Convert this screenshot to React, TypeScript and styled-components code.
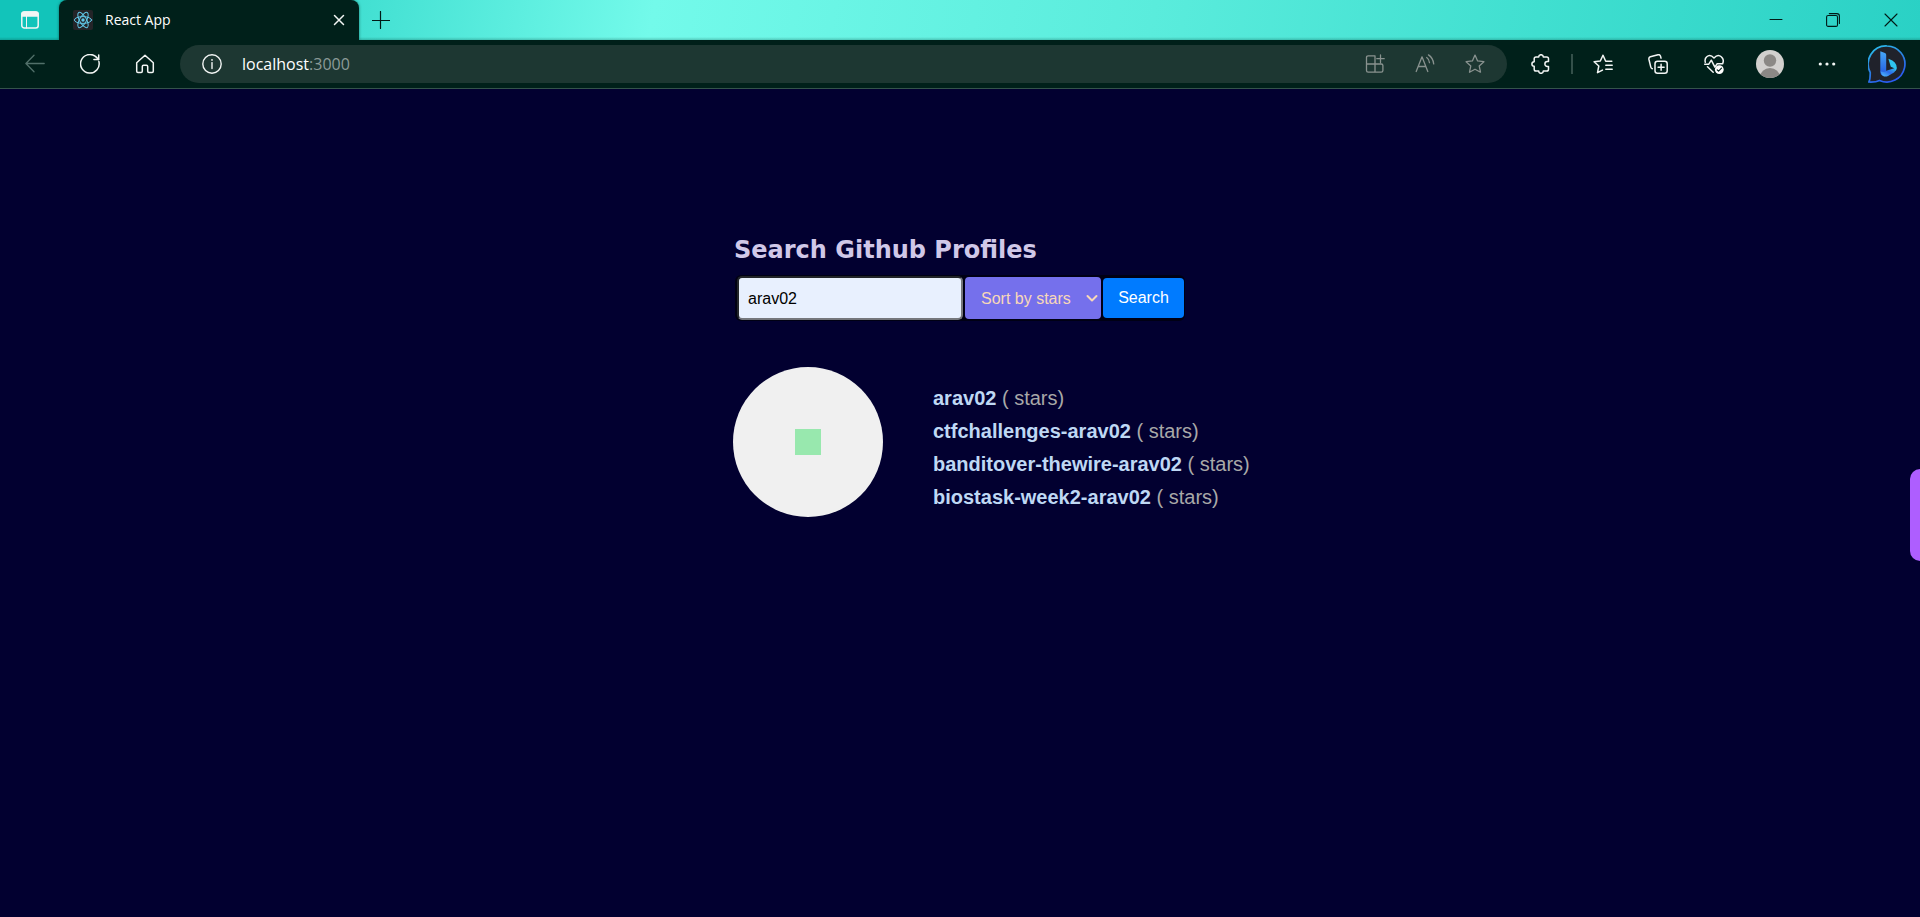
import React, { useState } from "react";
import styled, { createGlobalStyle } from "styled-components";

const GlobalStyle = createGlobalStyle`
  * { box-sizing: border-box; }
  body { margin: 0; background: #020030; overflow-x: hidden; }
`;

const chromeFont = `"Open Sans", "Noto Sans", sans-serif`;
const pageFont = `"Liberation Sans", Arial, sans-serif`;

const Window = styled.div`
  min-height: 100vh;
  display: flex;
  flex-direction: column;
  background: #020030;
  overflow: hidden;
`;

const TitleBar = styled.header`
  display: flex;
  height: 40px;
  background:
    linear-gradient(to bottom, transparent 37px, rgba(0, 60, 50, 0.25)),
    linear-gradient(100deg, #12c4ba 0%, #12c4ba 4%, #46e2d4 20%, #73faea 34%, #5aecdc 60%, #40dfd0 80%, #2ad1c5 100%);
`;

const IconButton = styled.button<{ $width?: number; $color?: string }>`
  display: flex;
  align-items: center;
  justify-content: center;
  flex: none;
  width: ${(p) => p.$width ?? 54}px;
  height: 100%;
  padding: 0;
  border: 0;
  background: none;
  color: ${(p) => p.$color ?? "#f2f5f4"};
`;

const Tab = styled.div`
  display: flex;
  align-items: center;
  width: 300px;
  height: 40px;
  padding: 0 4px 0 14px;
  gap: 12px;
  border-radius: 8px 8px 0 0;
  background: #00201a;
  box-shadow: 0 0 3px rgba(0, 50, 44, 0.6);
  color: #fff;
  font: 14px/20px ${chromeFont};
`;

const TabTitle = styled.span`
  flex: 1;
`;

const WindowControls = styled.div`
  display: flex;
  margin-left: auto;
`;

const Toolbar = styled.nav`
  display: flex;
  align-items: center;
  gap: 1px;
  height: 49px;
  padding: 0 3px 0 8px;
  background: #00201a;
  border-bottom: 1px solid #34534b;
`;

const AddressBar = styled.div`
  display: flex;
  align-items: center;
  flex: 1;
  height: 38px;
  margin: 0 6px 0 7px;
  padding: 0 7px 0 22px;
  border-radius: 19px;
  background: #1d3732;
  color: #f2f5f4;
`;

const Address = styled.div`
  flex: 1;
  margin-left: 20px;
  color: #8c9b98;
  font: 16px/24px ${chromeFont};
`;

const Host = styled.span`
  color: #fff;
`;

const Divider = styled.span`
  width: 2px;
  height: 20px;
  margin: 0 2px;
  background: #34504a;
`;

const Page = styled.main`
  position: relative;
  flex: 1;
  font-family: ${pageFont};
`;

const Content = styled.div`
  width: 454px;
  margin: 0 auto;
  padding-top: 145px;
`;

const Heading = styled.h1`
  margin: 0 1px 9px;
  color: #d0c8e8;
  font: bold 24px/32px "DejaVu Sans", Verdana, sans-serif;
  white-space: nowrap;
`;

const SearchForm = styled.form`
  display: flex;
  align-items: center;
  gap: 2px;
  width: 450px;
  height: 46px;
  margin-left: 2px;
  padding: 0 1px 0 2px;
  border-radius: 6px;
  background: #000014;
`;

const SearchInput = styled.input`
  width: 226px;
  height: 44px;
  padding: 2px 9px 0;
  border: 2px solid;
  border-color: #22252a #75777c #75777c #22252a;
  border-radius: 5px;
  background: #e8f0fe;
  color: #000;
  font: 16px ${pageFont};
`;

const SortField = styled.div`
  display: grid;
  align-items: center;
  width: 136px;
  color: #f8d8b8;

  > * { grid-area: 1 / 1; }
  > svg {
    justify-self: end;
    margin-right: 3px;
    pointer-events: none;
  }
`;

const SortSelect = styled.select`
  appearance: none;
  width: 100%;
  height: 42px;
  padding: 0 0 0 16px;
  border: 0;
  border-radius: 4px;
  background: #7570ec;
  color: inherit;
  font: 16px ${pageFont};
`;

const SearchButton = styled.button`
  flex: 1;
  height: 40px;
  padding: 0;
  border: 0;
  border-radius: 4px;
  background: #007bff;
  color: #fff;
  font: 16px ${pageFont};
`;

const Results = styled.section`
  display: flex;
  align-items: center;
  gap: 50px;
  margin-top: 46px;
`;

const Avatar = styled.div`
  display: flex;
  align-items: center;
  justify-content: center;
  flex: none;
  width: 150px;
  height: 150px;
  border-radius: 50%;
  background: #f0f0f0;
`;

const Identicon = styled.div`
  width: 26px;
  height: 26px;
  background: #98e8ae;
`;

const RepoList = styled.ul`
  margin: 12px 0 0;
  padding: 0;
  list-style: none;
  color: #a8a8a8;
  font-size: 20px;
  line-height: 33px;
  white-space: nowrap;
`;

const RepoLink = styled.a`
  color: #bfd8f4;
  font-weight: bold;
  text-decoration: none;
`;

const SideHandle = styled.button`
  position: absolute;
  top: 380px;
  right: 0;
  width: 10px;
  height: 92px;
  padding: 0;
  border: 0;
  border-radius: 10px 0 0 10px;
  background: #ae5eff;
`;

type IconProps = { size?: number; weight?: number; children: React.ReactNode };

const Icon = ({ size = 20, weight = 1.3, children }: IconProps) => (
  <svg
    width={size}
    height={size}
    viewBox={`0 0 ${size} ${size}`}
    fill="none"
    stroke="currentColor"
    strokeWidth={weight}
    strokeLinecap="round"
    strokeLinejoin="round"
    aria-hidden="true"
  >
    {children}
  </svg>
);

const TabActionsIcon = () => (
  <Icon weight={1.5}>
    <rect x="1.8" y="2" width="16.4" height="16" rx="2.5" />
    <path d="M2 4.5Q2 2 4.5 2h11Q18 2 18 4.500V6H2z" fill="currentColor" />
    <path d="M6.500 6v12" strokeWidth="1" />
  </Icon>
);

const ReactIcon = () => (
  <Icon weight={1}>
    <rect width="20" height="20" rx="2" fill="#242428" stroke="none" />
    <g stroke="#61c8e8">
      <ellipse cx="10" cy="10" rx="8.600" ry="3.400" />
      <ellipse cx="10" cy="10" rx="8.600" ry="3.400" transform="rotate(60 10 10)" />
      <ellipse cx="10" cy="10" rx="8.600" ry="3.400" transform="rotate(120 10 10)" />
    </g>
    <circle cx="10" cy="10" r="1.700" fill="#61c8e8" stroke="none" />
  </Icon>
);

const CloseTabIcon = () => (
  <Icon size={12} weight={1.5}><path d="m1.500 1.500 9 9m0-9-9 9" /></Icon>
);

const PlusIcon = () => (
  <Icon size={18} weight={1.2}><path d="M8.500.5v17M.5 9.500h17" /></Icon>
);

const MinimizeIcon = () => (
  <Icon size={14} weight={1}><path d="M1 6.500h12" /></Icon>
);

const RestoreIcon = () => (
  <Icon size={14} weight={1.1}>
    <rect x=".6" y="2.500" width="10.900" height="10.900" rx="1.500" />
    <path d="M3.300.600h7.500Q13.400.600 13.400 3v7.500" />
  </Icon>
);

const CloseIcon = () => (
  <Icon size={14} weight={1.1}><path d="m1 1 12 12m0-12L1 13" /></Icon>
);

const BackIcon = () => (
  <Icon><path d="M19.200 9.500H1.200M9 1.300.9 9.500 9 17.700" /></Icon>
);

const ReloadIcon = () => (
  <Icon weight={1.5}>
    <path d="M18.900 7.600A9.300 9.300 0 1 1 15.500 2.400L18.500 5.400" />
    <path d="M18.700.9v4.700h-4.800" />
  </Icon>
);

const HomeIcon = () => (
  <Icon weight={1.500}>
    <path d="M1.700 8.700 10 1.200l8.300 7.500v8.600q0 1.200-1.200 1.200h-3.200q-1.200 0-1.200-1.200v-4.800q0-1.200-1.200-1.200h-3q-1.200 0-1.200 1.200v4.800q0 1.200-1.200 1.200H2.900q-1.200 0-1.200-1.200z" />
  </Icon>
);

const InfoIcon = () => (
  <Icon weight={1.400}>
    <circle cx="10" cy="10" r="9.200" />
    <path d="M10 8.600v6" />
    <circle cx="10" cy="5.900" r=".9" fill="currentColor" stroke="none" />
  </Icon>
);

const AppsIcon = () => (
  <Icon>
    <path d="M10 1.800H3.200Q1.500 1.800 1.500 3.500v13q0 1.700 1.700 1.700h13q1.700 0 1.700-1.700v-5q0-1.500-1.700-1.500H1.500M10 1.800v16.400M15.500.9v7.600M11.800 4.700h7.400" />
  </Icon>
);

const ReadAloudIcon = () => (
  <Icon>
    <path d="M1.200 17.500 7 2.800l5.800 14.700M3.200 12.500h7.700M11.700 3.500q2.600 1.800 2.800 5.200M13.500.9q4.700 3.200 5.200 9" />
  </Icon>
);

const StarIcon = () => (
  <Icon>
    <path d="m10 1.100 2.600 5.800 6.300.8-4.700 4.200 1.300 6.300L10 15.200l-5.500 3 1.300-6.300L1.100 7.700l6.300-.8z" />
  </Icon>
);

const PuzzleIcon = () => (
  <Icon weight={1.500}>
    <path d="M5 3h2.700a2.300 2.300 0 0 1 4.600 0h3.400q1.800 0 1.800 1.800v2.800h-1.200a2.400 2.400 0 0 0 0 4.800h1.200v2.800q0 1.800-1.800 1.800h-3.400a2.300 2.300 0 0 1-4.600 0H5q-1.800 0-1.800-1.800v-2.900a2.300 2.300 0 0 1 0-4.600V4.800Q3.200 3 5 3z" />
  </Icon>
);

const FavoritesIcon = () => (
  <Icon weight={1.500}>
    <path d="M18.800 7.200h-6.100L10 1.200 7.300 7l-6.200.8 4.700 4.200-1.300 6.700 5-2.600M12.800 11.200h6.400M12.800 15.200h6.400" />
  </Icon>
);

const CollectionsIcon = () => (
  <Icon weight={1.500}>
    <rect x="7" y="7.200" width="12.200" height="12" rx="2.500" />
    <path d="M13.100 10.200v6M10.100 13.200h6M4.300 14.800q-1.200-.5-1.500-1.700L.9 5.200Q.6 3.400 2.300 2.700l7.800-2q1.900-.3 2.400 1.400l.5 2" />
  </Icon>
);

const HealthIcon = () => (
  <Icon weight={1.500}>
    <path d="M1.300 8.200Q.4 4.700 2.700 2.800c2.200-2 5-1.400 7.300 1.100 2.300-2.500 5.100-3.100 7.300-1.100 2.300 1.900 2.100 4.800 1.500 6.400M3.500 12.700l5.700 5.500M.7 10.200h4.100l2.500-4 3.600 7 2.300-3.500h5.500" />
    <circle cx="15.300" cy="15.600" r="4.400" fill="#fff" stroke="none" />
    <path d="m13.200 15.800 1.400 1.400 2.900-3" stroke="#00201a" strokeWidth="1.200" />
  </Icon>
);

const ProfileIcon = () => (
  <svg width="28" height="28" viewBox="0 0 28 28" aria-hidden="true">
    <defs><clipPath id="profile"><circle cx="14" cy="14" r="14" /></clipPath></defs>
    <g clipPath="url(#profile)">
      <rect width="28" height="28" fill="#d2d0ce" />
      <circle cx="14" cy="10.500" r="6.200" fill="#8b8885" />
      <ellipse cx="14" cy="27" rx="10" ry="9" fill="#8b8885" />
    </g>
  </svg>
);

const MoreIcon = () => (
  <Icon>
    <g fill="currentColor" stroke="none">
      <circle cx="3.300" cy="10" r="1.600" />
      <circle cx="10" cy="10" r="1.600" />
      <circle cx="16.700" cy="10" r="1.600" />
    </g>
  </Icon>
);

const ChevronIcon = () => (
  <Icon size={12} weight={2}><path d="m1.500 4 4.500 4.500L10.500 4" /></Icon>
);

const BingIcon = () => (
  <svg width="38" height="38" viewBox="0 0 38 38" aria-hidden="true">
    <defs>
      <linearGradient id="ring" x1="0" y1="0" x2=".5" y2="1">
        <stop stopColor="#2cc8f0" />
        <stop offset=".5" stopColor="#2a88e0" />
        <stop offset="1" stopColor="#2a5cf0" />
      </linearGradient>
      <linearGradient id="stem" x1="0" y1="0" x2="0" y2="1">
        <stop stopColor="#46a8f8" />
        <stop offset="1" stopColor="#2156df" />
      </linearGradient>
      <linearGradient id="bowl" x1="0" y1="1" x2="1" y2="0">
        <stop stopColor="#56c9ff" />
        <stop offset=".5" stopColor="#2c6bea" />
        <stop offset="1" stopColor="#31c8e8" />
      </linearGradient>
    </defs>
    <path d="M19 1a18 18 0 1 1-7.500 34.400Q8 37.300.900 37q1.500-2.800 1.300-9.700A18 18 0 0 1 19 1z" fill="#20222b" stroke="url(#ring)" strokeWidth="1.700" />
    <path d="M12.300 6.200 17 8q1.200.5 1.200 1.700v16l-3 5.300q-2.900-1-2.900-4.500z" fill="url(#stem)" />
    <path d="M12.500 26.500q.8 3.800 3.500 4.900 2 .6 4-.5l6-3.500q2.700-1.800 2.700-4.900l-10.500 3.200-2 1.200z" fill="url(#bowl)" />
    <path d="M20.500 14.300q-.6-.6.500-.4 7.700 2.600 7.700 8.700 0 2-1.200 3.400 0-2.300-2.300-3.200l-2.400-1.100z" fill="#2fc5ee" />
  </svg>
);

const repositories = [
  "arav02",
  "ctfchallenges-arav02",
  "banditover-thewire-arav02",
  "biostask-week2-arav02",
];

export default function App() {
  const [query, setQuery] = useState("arav02");

  return (
    <Window>
      <GlobalStyle />
      <TitleBar>
        <IconButton $width={59} aria-label="Tab actions"><TabActionsIcon /></IconButton>
        <Tab>
          <ReactIcon />
          <TabTitle>React App</TabTitle>
          <IconButton $width={32} aria-label="Close tab"><CloseTabIcon /></IconButton>
        </Tab>
        <IconButton $width={44} $color="#001a16" aria-label="New tab"><PlusIcon /></IconButton>
        <WindowControls>
          <IconButton $width={56} $color="#001a16" aria-label="Minimize"><MinimizeIcon /></IconButton>
          <IconButton $width={58} $color="#001a16" aria-label="Restore"><RestoreIcon /></IconButton>
          <IconButton $width={58} $color="#001a16" aria-label="Close"><CloseIcon /></IconButton>
        </WindowControls>
      </TitleBar>

      <Toolbar>
        <IconButton $color="#51706a" aria-label="Back"><BackIcon /></IconButton>
        <IconButton aria-label="Refresh"><ReloadIcon /></IconButton>
        <IconButton aria-label="Home"><HomeIcon /></IconButton>
        <AddressBar>
          <InfoIcon />
          <Address><Host>localhost</Host>:3000</Address>
          <IconButton $width={50} $color="#89928f" aria-label="Install app"><AppsIcon /></IconButton>
          <IconButton $width={50} $color="#89928f" aria-label="Read aloud"><ReadAloudIcon /></IconButton>
          <IconButton $width={50} $color="#89928f" aria-label="Add to favorites"><StarIcon /></IconButton>
        </AddressBar>
        <IconButton aria-label="Extensions"><PuzzleIcon /></IconButton>
        <Divider />
        <IconButton aria-label="Favorites"><FavoritesIcon /></IconButton>
        <IconButton aria-label="Collections"><CollectionsIcon /></IconButton>
        <IconButton $width={56} aria-label="Browser essentials"><HealthIcon /></IconButton>
        <IconButton aria-label="Profile"><ProfileIcon /></IconButton>
        <IconButton $width={58} aria-label="Settings and more"><MoreIcon /></IconButton>
        <IconButton $width={60} aria-label="Bing"><BingIcon /></IconButton>
      </Toolbar>

      <Page>
        <Content>
          <Heading>Search Github Profiles</Heading>
          <SearchForm onSubmit={(e) => e.preventDefault()}>
            <SearchInput
              aria-label="Github username"
              value={query}
              onChange={(e) => setQuery(e.target.value)}
            />
            <SortField>
              <SortSelect aria-label="Sort order">
                <option>Sort by stars</option>
              </SortSelect>
              <ChevronIcon />
            </SortField>
            <SearchButton type="submit">Search</SearchButton>
          </SearchForm>
          <Results>
            <Avatar role="img" aria-label="arav02 avatar"><Identicon /></Avatar>
            <RepoList>
              {repositories.map((name) => (
                <li key={name}>
                  <RepoLink href={`#${name}`}>{name}</RepoLink> ( stars)
                </li>
              ))}
            </RepoList>
          </Results>
        </Content>
        <SideHandle aria-label="Open side panel" />
      </Page>
    </Window>
  );
}
